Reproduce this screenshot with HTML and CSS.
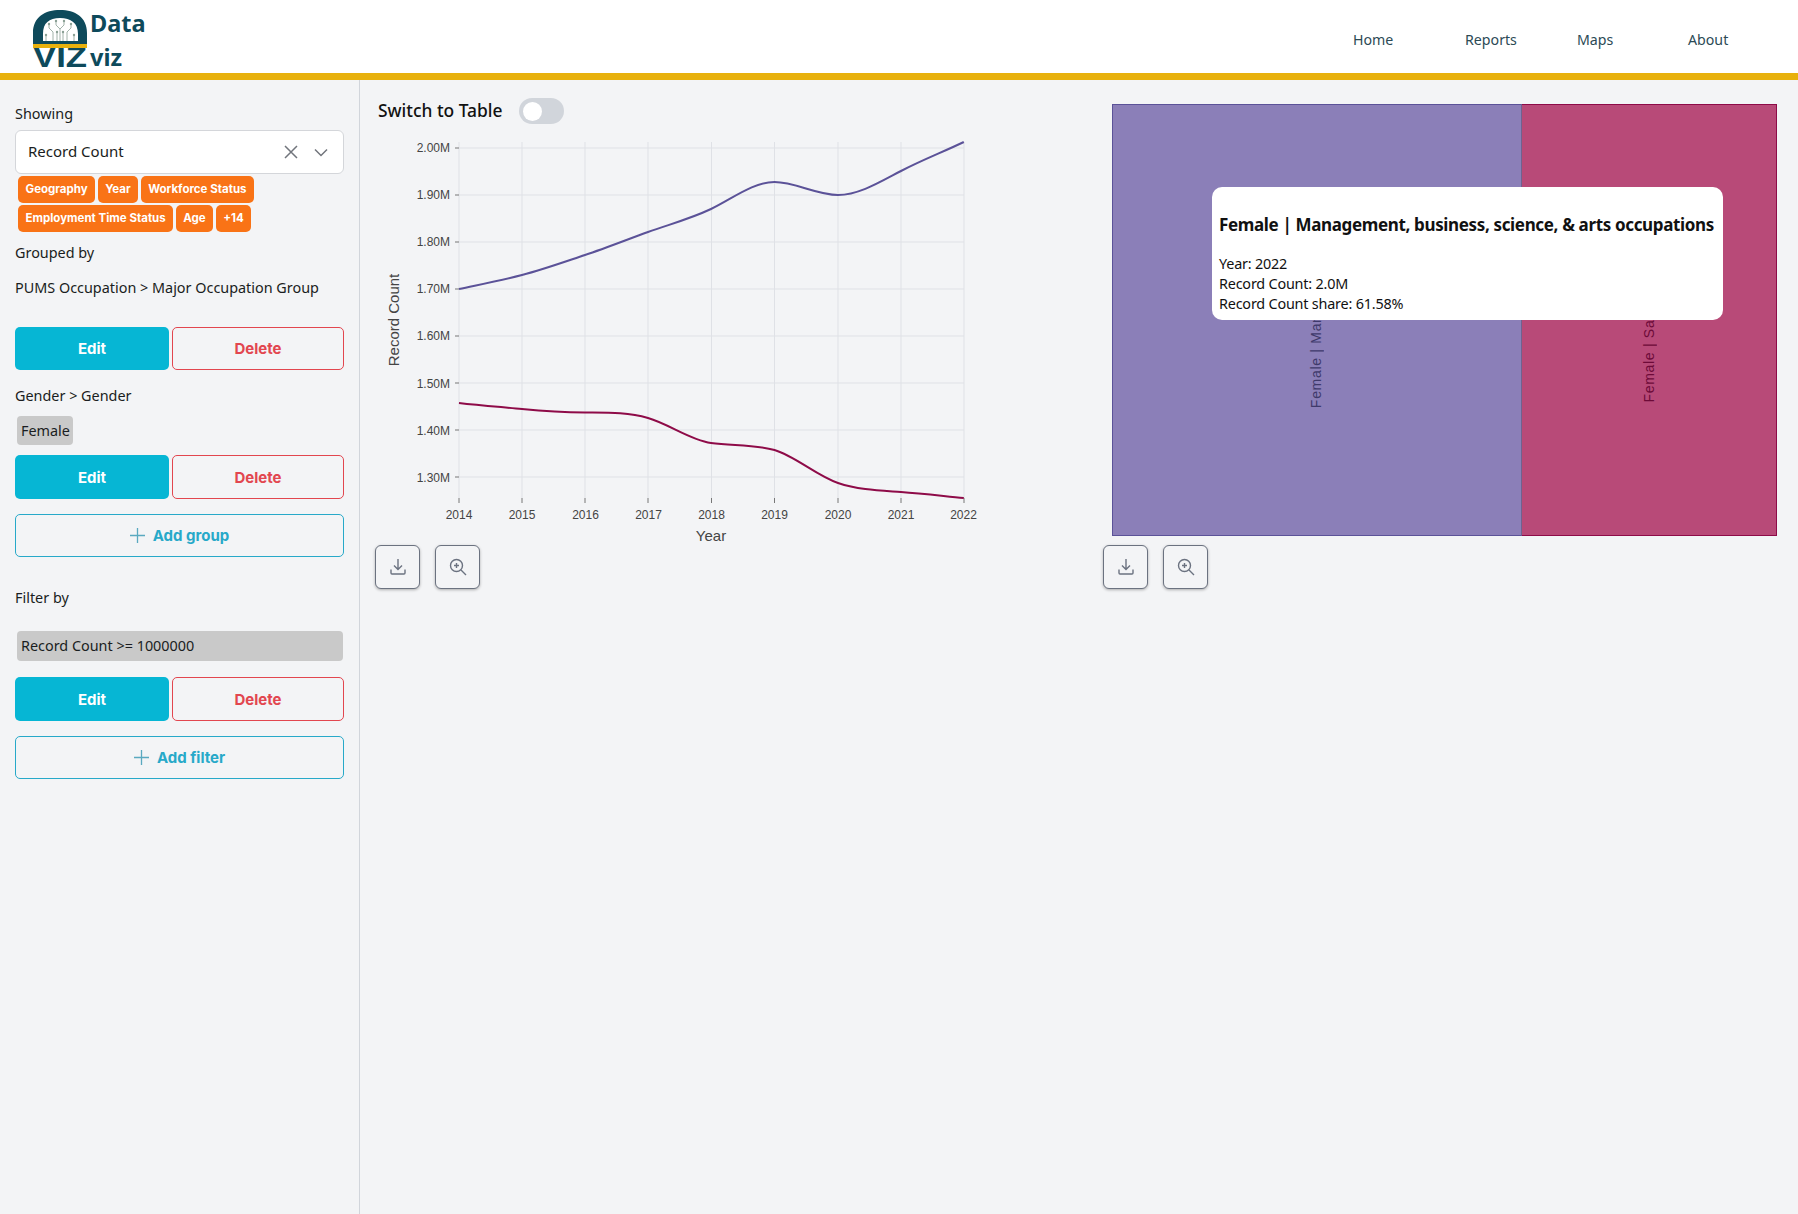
FILE: index.html
```html
<!DOCTYPE html>
<html lang="en">
<head>
<meta charset="utf-8">
<title>Data viz</title>
<link rel="stylesheet" href="styles.css">
</head>
<body>
<header class="topbar">
  <div class="brand">
    <svg class="logo" width="58" height="68" viewBox="0 0 58 68" aria-hidden="true">
      <path class="logo-arch" d="M0 39V28C0 12 12 5 27 5S54 12 54 28V39H45V29C45 18 38 13 27 13S10 18 10 29V39Z"/>
      <rect class="logo-inner" x="10" y="36" width="35" height="3"/>
      <g class="logo-circuit">
        <path d="M27 36V24L23 20V17M27 24L31 20V17M20 36V27L16 23V20M34 36V27L38 23V20M13 36V31M41 36V31M24 36V28M30 36V28"/>
        <circle cx="23" cy="16" r="1.2"/><circle cx="31" cy="16" r="1.2"/><circle cx="16" cy="19" r="1.2"/><circle cx="38" cy="19" r="1.2"/><circle cx="13" cy="30" r="1.2"/><circle cx="41" cy="30" r="1.2"/><circle cx="24" cy="27" r="1.2"/><circle cx="30" cy="27" r="1.2"/>
      </g>
      <text class="logo-viz" x="0" y="62" textLength="54" lengthAdjust="spacingAndGlyphs">VIZ</text>
      <rect class="logo-gold" x="0" y="39" width="54" height="4"/>
    </svg>
    <div class="wordmark"><span>Data</span><span>viz</span></div>
  </div>
  <nav class="nav">
    <a>Home</a><a>Reports</a><a>Maps</a><a>About</a>
  </nav>
</header>
<div class="page">
  <aside class="sidebar">
    <div class="label label-showing">Showing</div>
    <div class="select">
      <span class="select-value">Record Count</span>
      <svg class="select-icon" width="14" height="14" viewBox="0 0 14 14"><path d="M1 1L13 13M13 1L1 13"/></svg>
      <svg class="select-icon" width="14" height="9" viewBox="0 0 14 9"><path d="M1 1.500L7 7.500L13 1.500"/></svg>
    </div>
    <div class="tags">
      <span class="tag">Geography</span><span class="tag">Year</span><span class="tag">Workforce Status</span>
      <span class="tag">Employment Time Status</span><span class="tag">Age</span><span class="tag">+14</span>
    </div>
    <div class="label label-grouped">Grouped by</div>
    <div class="label label-pums">PUMS Occupation &gt; Major Occupation Group</div>
    <div class="btn-row btn-row-first">
      <button class="btn btn-edit">Edit</button><button class="btn btn-delete">Delete</button>
    </div>
    <div class="label label-gender">Gender &gt; Gender</div>
    <div class="chip chip-female">Female</div>
    <div class="btn-row btn-row-tall">
      <button class="btn btn-edit">Edit</button><button class="btn btn-delete">Delete</button>
    </div>
    <button class="btn btn-add">
      <svg class="plus" width="15" height="15" viewBox="0 0 15 15"><path d="M7.500 0V15M0 7.500H15"/></svg>Add group
    </button>
    <div class="label label-filter">Filter by</div>
    <div class="chip chip-filter">Record Count &gt;= 1000000</div>
    <div class="btn-row btn-row-filter">
      <button class="btn btn-edit">Edit</button><button class="btn btn-delete">Delete</button>
    </div>
    <button class="btn btn-add">
      <svg class="plus" width="15" height="15" viewBox="0 0 15 15"><path d="M7.500 0V15M0 7.500H15"/></svg>Add filter
    </button>
  </aside>
  <main class="main">
    <section class="col-chart">
      <div class="switch-row">
        <span class="switch-label">Switch to Table</span>
        <span class="switch"><span class="knob"></span></span>
      </div>
      <svg class="chart" width="640" height="421" viewBox="375 124 640 421" role="img">
        <g class="grid">
          <path d="M459 142V498M522 142V498M585 142V498M648 142V498M711.500 142V498M774.500 142V498M838 142V498M901 142V498M964 142V498"/>
          <path d="M459 148H964M459 195H964M459 242H964M459 289H964M459 336H964M459 383H964M459 430H964M459 477H964"/>
        </g>
        <g class="ticks">
          <path d="M455 148H459M455 195H459M455 242H459M455 289H459M455 336H459M455 383H459M455 430H459M455 477H459"/>
          <path d="M459 498V503M522 498V503M585 498V503M648 498V503M711.500 498V503M774.500 498V503M838 498V503M901 498V503M964 498V503"/>
        </g>
        <g class="ytick-labels">
          <text x="450" y="152">2.00M</text><text x="450" y="199">1.90M</text><text x="450" y="246">1.80M</text><text x="450" y="293">1.70M</text><text x="450" y="340">1.60M</text><text x="450" y="388">1.50M</text><text x="450" y="435">1.40M</text><text x="450" y="482">1.30M</text>
        </g>
        <g class="xtick-labels">
          <text x="459" y="519">2014</text><text x="522" y="519">2015</text><text x="585.500" y="519">2016</text><text x="648.500" y="519">2017</text><text x="711.500" y="519">2018</text><text x="774.500" y="519">2019</text><text x="838" y="519">2020</text><text x="901" y="519">2021</text><text x="963.500" y="519">2022</text>
        </g>
        <text class="axis-title" x="711" y="541">Year</text>
        <text class="axis-title" transform="translate(399 320) rotate(-90)">Record Count</text>
        <path class="line line-purple" d="M459 289C480 284.500 501 280.500 522 275C543 269.500 564 262 585 255C606 248 627 239.600 648 232C669 224.400 690 219 711 209C732 199 753 182 774.500 182C795 182 817 195 838 195C859 195 880 182 901 171C922 160 943 152 963.800 142"/>
        <path class="line line-red" d="M459 403C480 405.500 501 407 522 409C543 411 564 412.300 585 412.500C606 412.700 627 412 648 418C669 424 690 440 711 443C732 446 753 444 774.500 450C795 456 817 476 838 483C859 490 880 490.500 901 492C922 493.500 943 496 963.800 498"/>
      </svg>
      <div class="tools">
        <button class="tool"><svg width="18" height="18" viewBox="0 0 18 18"><path d="M9 1V11M5 7.500L9 11.500L13 7.500M2 11.500V15A1 1 0 0 0 3 16H15A1 1 0 0 0 16 15V11.500"/></svg></button>
        <button class="tool"><svg width="18" height="18" viewBox="0 0 18 18"><circle cx="7.500" cy="7.500" r="6"/><path d="M12 12L17 17M7.500 5V10M5 7.500H10"/></svg></button>
      </div>
    </section>
    <section class="col-map">
      <div class="treemap">
        <div class="cell cell-purple"><span class="cell-label">Female | Management</span></div>
        <div class="cell cell-red"><span class="cell-label">Female | Sales &amp; office</span></div>
        <div class="tooltip">
          <div class="tooltip-title">Female | Management, business, science, &amp; arts occupations</div>
          <div class="tooltip-line">Year: 2022</div>
          <div class="tooltip-line">Record Count: 2.0M</div>
          <div class="tooltip-line">Record Count share: 61.58%</div>
        </div>
      </div>
      <div class="tools tools-map">
        <button class="tool"><svg width="18" height="18" viewBox="0 0 18 18"><path d="M9 1V11M5 7.500L9 11.500L13 7.500M2 11.500V15A1 1 0 0 0 3 16H15A1 1 0 0 0 16 15V11.500"/></svg></button>
        <button class="tool"><svg width="18" height="18" viewBox="0 0 18 18"><circle cx="7.500" cy="7.500" r="6"/><path d="M12 12L17 17M7.500 5V10M5 7.500H10"/></svg></button>
      </div>
    </section>
  </main>
</div>
</body>
</html>
```
FILE: styles.css
```css
* { box-sizing: border-box; }
html, body { margin: 0; height: 100%; }
body {
  background: #f3f4f6;
  color: #1a1d21;
  font-family: "Noto Sans", "Open Sans", sans-serif;
  font-size: 14.4px;
  overflow: hidden;
}
.topbar {
  height: 80px;
  background: #fff;
  border-bottom: 7px solid #e8b10d;
  display: flex;
  justify-content: space-between;
  align-items: flex-start;
}
.brand { display: flex; margin-left: 33px; padding-top: 5px; }
.logo { display: block; }
.logo-arch, .logo-viz { fill: #0e4a5b; }
.logo-inner { fill: #0e4a5b; }
.logo-gold { fill: #e8b10d; }
.logo-circuit path { fill: none; stroke: #8a9f94; stroke-width: 0.8; }
.logo-circuit circle { fill: #8a9f94; }
.logo-viz { font: 700 30px "Liberation Sans", sans-serif; }
.wordmark {
  display: flex;
  flex-direction: column;
  margin: 1px 0 0 -1px;
  color: #0e4a5b;
  font: 700 23.5px/34px "Noto Sans", sans-serif;
}
.wordmark span { display: block; }
.nav {
  display: grid;
  grid-template-columns: 112px 112px 111px 40px;
  margin-right: 70px;
  padding-top: 30px;
  color: #2c4a55;
  font-size: 14.2px;
  line-height: 20px;
}
.page { display: flex; height: 1134px; }
.sidebar {
  width: 360px;
  flex: none;
  padding: 24px 15px 0;
  border-right: 1px solid #d1d5db;
  display: flex;
  flex-direction: column;
  align-items: stretch;
}
.label { line-height: 19px; height: 20px; }
.select {
  margin-top: 6px;
  height: 44px;
  background: #fff;
  border: 1px solid #d4d6da;
  border-radius: 6px;
  display: flex;
  align-items: center;
  padding: 0 15px 0 12px;
  gap: 16px;
}
.select-value { flex: 1; font-size: 15px; padding-bottom: 2px; }
.select-icon path { fill: none; stroke: #71757c; stroke-width: 1.500; }
.tags {
  margin-top: 2px;
  padding-left: 3px;
  display: flex;
  flex-wrap: wrap;
  gap: 2px 2.500px;
  width: 280px;
}
.tag {
  height: 27px;
  padding: 0 7.5px;
  background: #f97316;
  color: #fff;
  border-radius: 5px;
  font: 700 11.5px/26px Inter, sans-serif;
}
.label-grouped { margin-top: 11px; }
.label-pums { margin-top: 15px; }
.btn-row { display: grid; grid-template-columns: 154px 172px; column-gap: 3px; }
.btn-row-first { margin-top: 29px; height: 43px; }
.btn-row-tall { margin-top: 10px; height: 44px; }
.btn-row-filter { margin-top: 16px; height: 44px; }
.btn {
  font: 700 15px Inter, sans-serif;
  border-radius: 5px;
  padding: 0;
  background: none;
}
.btn-edit { background: #06b6d4; color: #fff; border: 0; }
.btn-delete { color: #e2464f; border: 1px solid #e2464f; }
.btn-add {
  margin-top: 15px;
  height: 43px;
  color: #27a9c9;
  border: 1px solid #27a9c9;
  display: flex;
  align-items: center;
  justify-content: center;
  gap: 8px;
  width: 329px;
}
.plus path { fill: none; stroke: #5aa9c0; stroke-width: 1.300; }
.label-gender { margin-top: 16px; }
.chip { background: #c9c9c9; border-radius: 4px; padding: 0 4px; }
.chip-female { margin: 10px 0 0 2px; width: 56px; height: 29px; line-height: 29px; }
.label-filter { margin-top: 31px; }
.chip-filter { margin: 23px 0 0 2px; width: 326px; height: 30px; line-height: 30px; }

.main { flex: 1; display: flex; padding-left: 15px; }
.col-chart { width: 728px; padding-top: 18px; flex: none; }
.switch-row { height: 26px; display: flex; align-items: center; padding-left: 3px; }
.switch-label { width: 141px; padding-bottom: 2px; font-size: 17.4px; font-weight: 500; color: #111; white-space: nowrap; }
.switch {
  width: 45px;
  height: 26px;
  border-radius: 13px;
  background: #d1d5db;
  display: flex;
  align-items: center;
  padding-left: 4px;
}
.knob { width: 19px; height: 19px; border-radius: 50%; background: #fff; }
.chart { display: block; }
.grid path { stroke: #dfe1e6; fill: none; }
.ticks path { stroke: #777; fill: none; }
.ytick-labels text { text-anchor: end; }
.xtick-labels text { text-anchor: middle; }
.ytick-labels text, .xtick-labels text { font: 12px "Liberation Sans", sans-serif; fill: #444; }
.axis-title { font: 15px "Liberation Sans", sans-serif; fill: #444; text-anchor: middle; }
.line { fill: none; stroke-width: 2; }
.line-purple { stroke: #5b5298; }
.line-red { stroke: #8e0b48; }
.tools { display: flex; gap: 15px; }
.tool {
  width: 45px;
  height: 44px;
  padding: 0;
  background: #f3f4f6;
  border: 1px solid #6b7280;
  border-radius: 6px;
  box-shadow: 0 1px 3px rgba(0,0,0,.3);
  display: flex;
  align-items: center;
  justify-content: center;
}
.tool svg { fill: none; stroke: #6b7280; stroke-width: 1.400; }
.col-map { flex: none; width: 690px; }
.treemap {
  position: relative;
  margin: 24px 0 9px 9px;
  width: 665px;
  height: 432px;
  display: flex;
}
.cell { height: 100%; position: relative; }
.cell-purple { width: 410px; background: #8b7fb8; border: 1px solid #5b5298; border-right-color: #6f638f; }
.cell-red { flex: 1; background: #b84a78; border: 1px solid #8e0b48; border-left: 0; }
.cell-label {
  position: absolute;
  bottom: 127px;
  writing-mode: vertical-rl;
  transform: rotate(180deg);
  font: 14px/16px "Liberation Sans", sans-serif;
  letter-spacing: .7px;
  white-space: nowrap;
}
.cell-purple .cell-label { left: 195px; color: #3f3a6b; }
.cell-red .cell-label { left: 119px; bottom: 132px; color: #6d0a38; }
.tooltip {
  position: absolute;
  left: 100px;
  top: 83px;
  width: 511px;
  height: 133px;
  background: #fff;
  border-radius: 10px;
  padding: 0 7px;
  color: #111;
}
.tooltip-title { margin-top: 26px; margin-bottom: 17px; font-size: 17px; letter-spacing: -0.35px; line-height: 24px; font-weight: 700; white-space: nowrap; }
.tooltip-line { font-size: 14.4px; letter-spacing: -0.2px; line-height: 20px; }
```
